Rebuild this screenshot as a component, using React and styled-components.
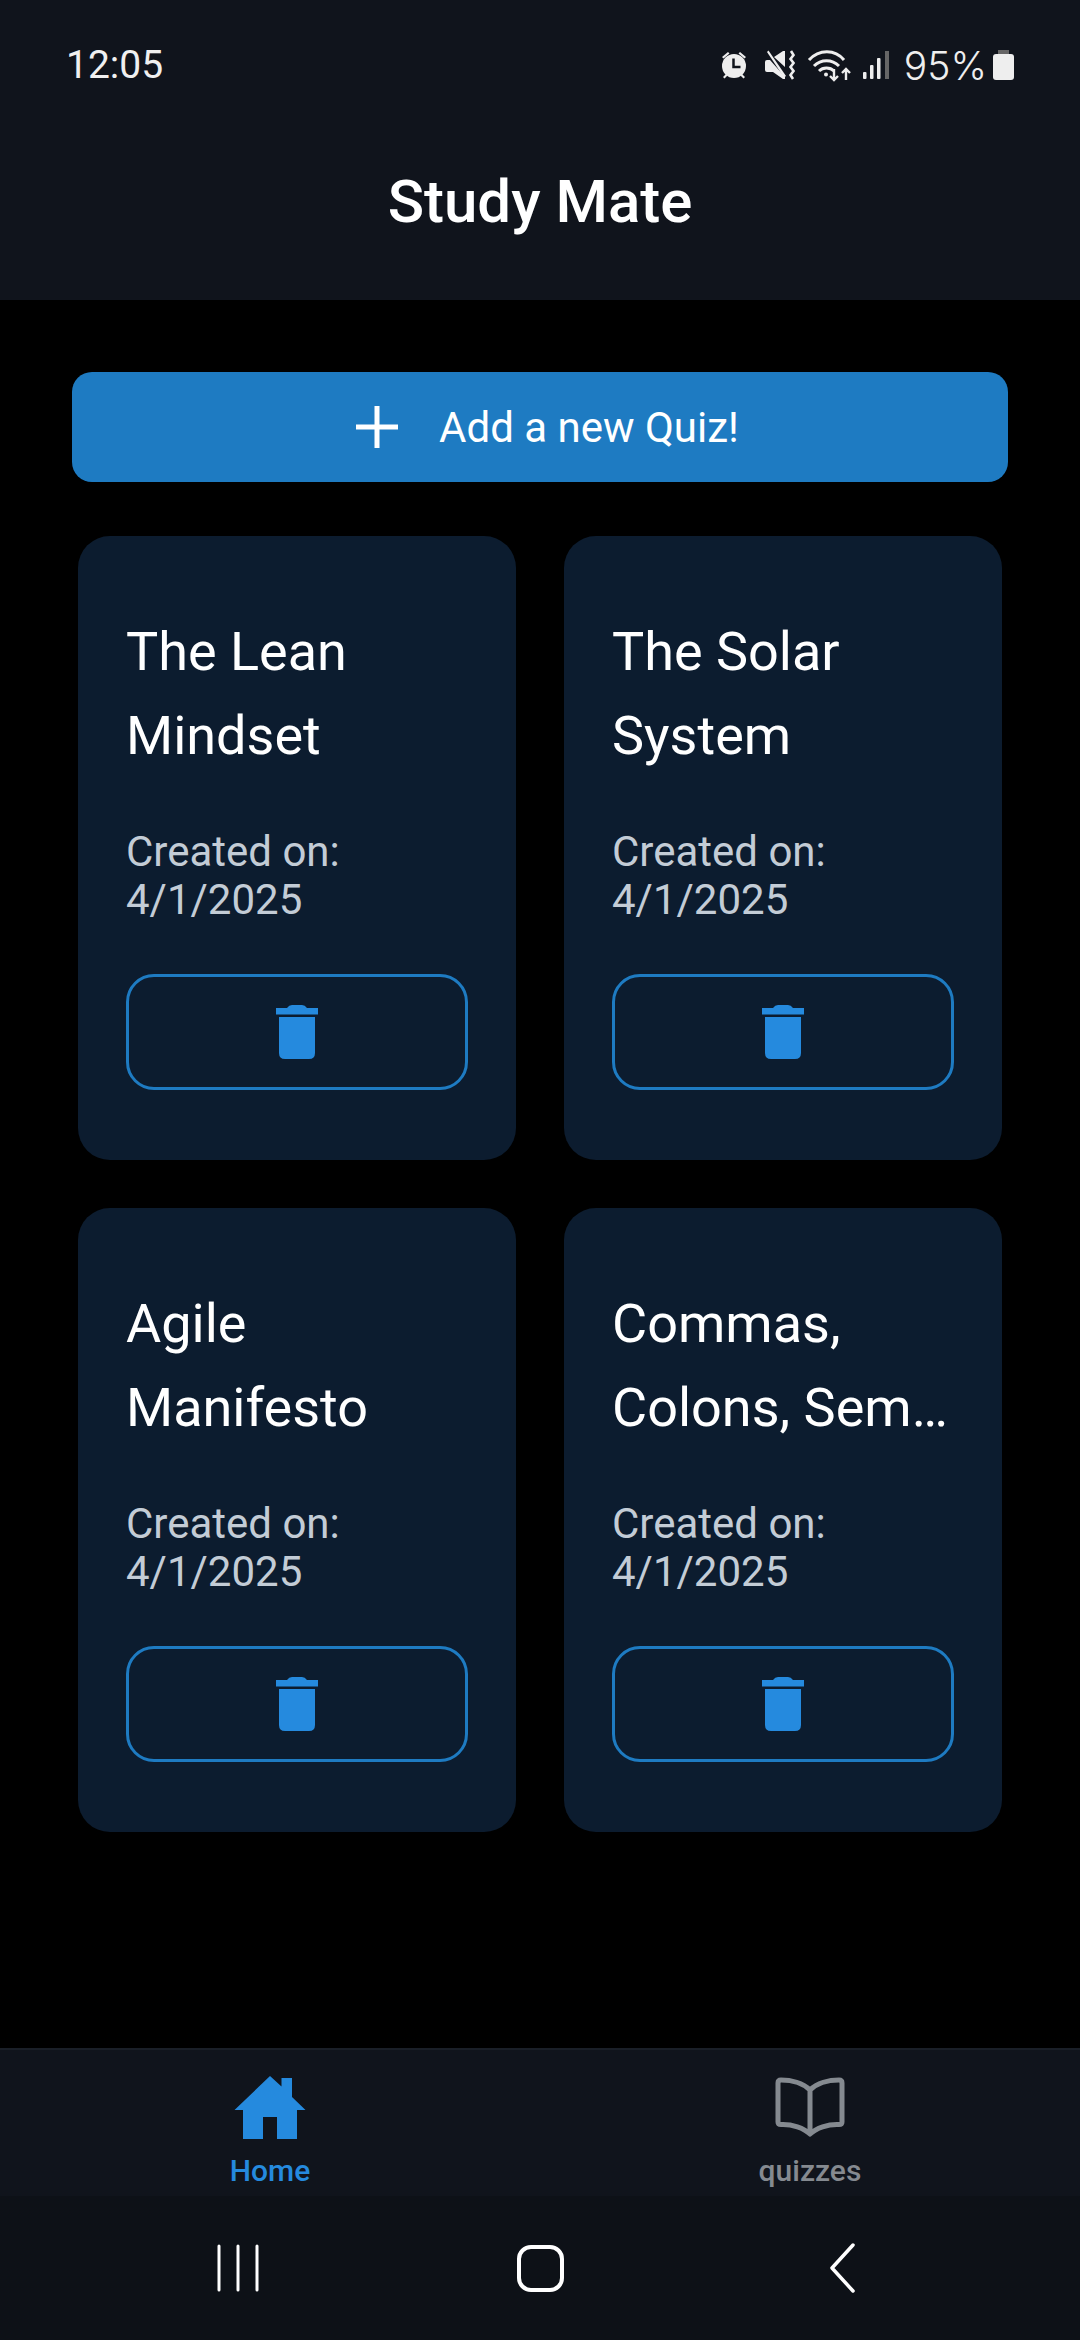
import React from 'react'
import styled, { createGlobalStyle } from 'styled-components'

const quizzes = [
  { id: 1, lines: ['The Lean', 'Mindset'], date: '4/1/2025' },
  { id: 2, lines: ['The Solar', 'System'], date: '4/1/2025' },
  { id: 3, lines: ['Agile', 'Manifesto'], date: '4/1/2025' },
  { id: 4, lines: ['Commas,', 'Colons, Semicolons'], date: '4/1/2025' },
]

const App = () => {
  return (
    <Page>
      <GlobalStyle />
      <Header>
        <StatusBar>
          <Clock>12:05</Clock>
          <StatusIcons>
            <AlarmIcon />
            <MuteIcon />
            <WifiIcon />
            <SignalIcon />
            <Battery>95%</Battery>
            <BatteryIcon />
          </StatusIcons>
        </StatusBar>
        <Title>Study Mate</Title>
      </Header>

      <Main>
        <AddButton>
          <svg width="44" height="44" viewBox="0 0 44 44">
            <path d="M22 1v42M1 22h42" stroke="#fff" strokeWidth="5" />
          </svg>
          <span>Add a new Quiz!</span>
        </AddButton>
        <Grid>
          {quizzes.map((q) => (
            <Card key={q.id}>
              <CardTitle>
                {q.lines.map((line) => (
                  <TitleLine key={line}>{line}</TitleLine>
                ))}
              </CardTitle>
              <CardDate>Created on:<br />{q.date}</CardDate>
              <DeleteButton>
                <TrashIcon />
              </DeleteButton>
            </Card>
          ))}
        </Grid>
      </Main>

      <TabBar>
        <Tab $active>
          <HomeIcon />
          <TabLabel>Home</TabLabel>
        </Tab>
        <Tab>
          <BookIcon />
          <TabLabel>quizzes</TabLabel>
        </Tab>
      </TabBar>

      <NavBar>
        <svg width="42" height="48" viewBox="0 0 42 48">
          <path d="M2 2v44M21 2v44M40 2v44" stroke="#fff" strokeWidth="3" strokeLinecap="round" />
        </svg>
        <HomeKey />
        <svg width="26" height="50" viewBox="0 0 26 50">
          <path d="M24 2 3 25l21 23" fill="none" stroke="#fff" strokeWidth="3.500" strokeLinecap="round" strokeLinejoin="round" />
        </svg>
      </NavBar>
    </Page>
  )
}

export default App

const AlarmIcon = () => (
  <StatusGlyph width="28" height="30" viewBox="1 0 28 30" fill="#eee">
    <circle cx="15" cy="16" r="12" />
    <path d="M3 7l6-5 1.500 1.500-6 5zM27 7l-6-5-1.500 1.500 6 5zM4 27l3-3 1.500 1.500-3 3zM26 27l-3-3-1.500 1.500 3 3z" />
    <path d="M14.500 8.500v8.500h7" fill="none" stroke="#10141c" strokeWidth="2.500" />
  </StatusGlyph>
)

const MuteIcon = () => (
  <StatusGlyph $left={17} width="30" height="30" viewBox="0 0 30 30" fill="#eee">
    <path d="M0 12q0-2 2-2h3l15 17v2h-2L8 22H2q-2 0-2-2zM9 7l9-6h2v16z" />
    <path d="M2 2l1.500-1.500L21 26l-2 1.500z" />
    <path d="M26 1l2.500 4-3 4 3 4-3 4 3 4-3 4 2.500 4" fill="none" stroke="#eee" strokeWidth="2.600" />
  </StatusGlyph>
)

const WifiIcon = () => (
  <StatusGlyph $left={12} width="44" height="36" viewBox="0 0 44 36" fill="none" stroke="#eee" strokeWidth="3">
    <path d="M2 13C12 2 28 2 37 13" />
    <path d="M7 19c7-7 18-7 25 0" />
    <path d="M12 24c4-4 11-4 15 0" />
    <circle cx="19" cy="27.500" r="2" fill="#eee" stroke="none" />
    <path d="M27 22v11M23 29l4 4 4-4M39 33V22M35 26l4-4 4 4" strokeWidth="2.400" />
  </StatusGlyph>
)

const SignalIcon = () => (
  <StatusGlyph $left={12} width="26" height="30" viewBox="0 0 26 30" fill="#eee">
    <rect x="0" y="22" width="3.500" height="7" rx="1" />
    <rect x="7" y="15" width="3.500" height="14" rx="1" />
    <rect x="14" y="8" width="3.500" height="21" rx="1" />
    <rect x="22" y="1" width="4" height="28" fill="#666" />
  </StatusGlyph>
)

const BatteryIcon = () => (
  <StatusGlyph $left={6} width="21" height="30" viewBox="0 0 21 30">
    <path d="M5 0h11v4H5z" fill="#666" />
    <rect x="0" y="4" width="21" height="26" rx="3" fill="#eee" />
  </StatusGlyph>
)

const TrashIcon = () => (
  <svg width="42" height="55" viewBox="0 0 42 55" fill="#258ade">
    <path d="M0 3h11q2-3 5-3h10q3 0 5 3h11v6.500H0z" />
    <path d="M3 12h36v36q0 6-6 6H9q-6 0-6-6z" />
  </svg>
)

const HomeIcon = () => (
  <svg width="72" height="64" viewBox="0 0 72 64" fill="#258ade">
    <path d="M36 0 47.500 10.500V2H58V21L71.500 34H63V63H43V41H29V63H9V34H.5z" />
  </svg>
)

const BookIcon = () => (
  <svg width="72" height="64" viewBox="0 0 72 64" fill="none" stroke="#858a90" strokeWidth="5" strokeLinejoin="round">
    <path d="M36 14C29 7 17 4 7 4q-3 0-3 3v39q0 2.500 3 2.500C18 48 30 52 36 58c6-6 18-10 29-9.500q3 0 3-2.500V7q0-3-3-3C55 4 43 7 36 14zM36 14v44" />
  </svg>
)

const GlobalStyle = createGlobalStyle`
  html, body {
    margin: 0;
    padding: 0;
    background: #000;
  }
  * {
    box-sizing: border-box;
  }
`

const Page = styled.div`
  width: 1080px;
  height: 2340px;
  display: flex;
  flex-direction: column;
  background: #000;
  color: #fff;
  font-family: Roboto, "Noto Sans", sans-serif;
`

const Header = styled.header`
  height: 300px;
  padding-top: 44px;
  background: #10141c;
`

const StatusBar = styled.div`
  height: 42px;
  padding: 0 66px;
  display: flex;
  align-items: center;
  justify-content: space-between;
`

const Clock = styled.span`
  font-size: 39px;
  font-weight: 400;
  color: #f0f0f0;
`

const StatusIcons = styled.div`
  display: flex;
  align-items: center;
`

const StatusGlyph = styled.svg`
  margin-left: ${(p) => p.$left || 0}px;
`

const Battery = styled.span`
  margin-left: 15px;
  font-family: Inter, Roboto, sans-serif;
  font-size: 39px;
  font-weight: 300;
  color: #eee;
`

const Title = styled.h1`
  margin: 86px 0 0;
  font-size: 60px;
  line-height: 60px;
  font-weight: 500;
  text-align: center;
`

const Main = styled.main`
  flex: 1;
  padding: 72px 72px 0;
`

const AddButton = styled.div`
  height: 110px;
  padding-left: 14px;
  border-radius: 20px;
  background: #1e7bc2;
  display: flex;
  align-items: center;
  justify-content: center;
  gap: 40px;
  font-size: 42px;
`

const Grid = styled.div`
  margin: 54px 6px 0;
  display: grid;
  grid-template-columns: 438px 438px;
  justify-content: space-between;
  row-gap: 48px;
`

const Card = styled.article`
  height: 624px;
  padding: 74px 48px 0;
  border-radius: 32px;
  background: #0c1c2f;
`

const CardTitle = styled.h2`
  margin: 0;
  font-size: 54px;
  line-height: 84px;
  font-weight: 400;
`

const TitleLine = styled.span`
  display: block;
  white-space: nowrap;
  overflow: hidden;
  text-overflow: ellipsis;
`

const CardDate = styled.p`
  margin: 50px 0 0;
  font-size: 42px;
  line-height: 48px;
  color: #c3ccd6;
`

const DeleteButton = styled.div`
  margin-top: 50px;
  height: 116px;
  border: 3px solid #1e7bc2;
  border-radius: 28px;
  display: flex;
  align-items: center;
  justify-content: center;
`

const TabBar = styled.nav`
  height: 148px;
  padding-top: 26px;
  border-top: 2px solid #1a1f28;
  background: #10141c;
  display: flex;
`

const Tab = styled.div`
  flex: 1;
  display: flex;
  flex-direction: column;
  align-items: center;
  color: ${(p) => (p.$active ? '#258ade' : '#858a90')};
`

const TabLabel = styled.span`
  margin-top: 13px;
  font-size: 30px;
  line-height: 36px;
  font-weight: 500;
`

const NavBar = styled.div`
  height: 144px;
  background: #0d1117;
  display: grid;
  grid-template-columns: repeat(3, 302px);
  justify-content: center;
  justify-items: center;
  align-items: center;
`

const HomeKey = styled.div`
  width: 47px;
  height: 47px;
  border: 4px solid #fff;
  border-radius: 14px;
`
